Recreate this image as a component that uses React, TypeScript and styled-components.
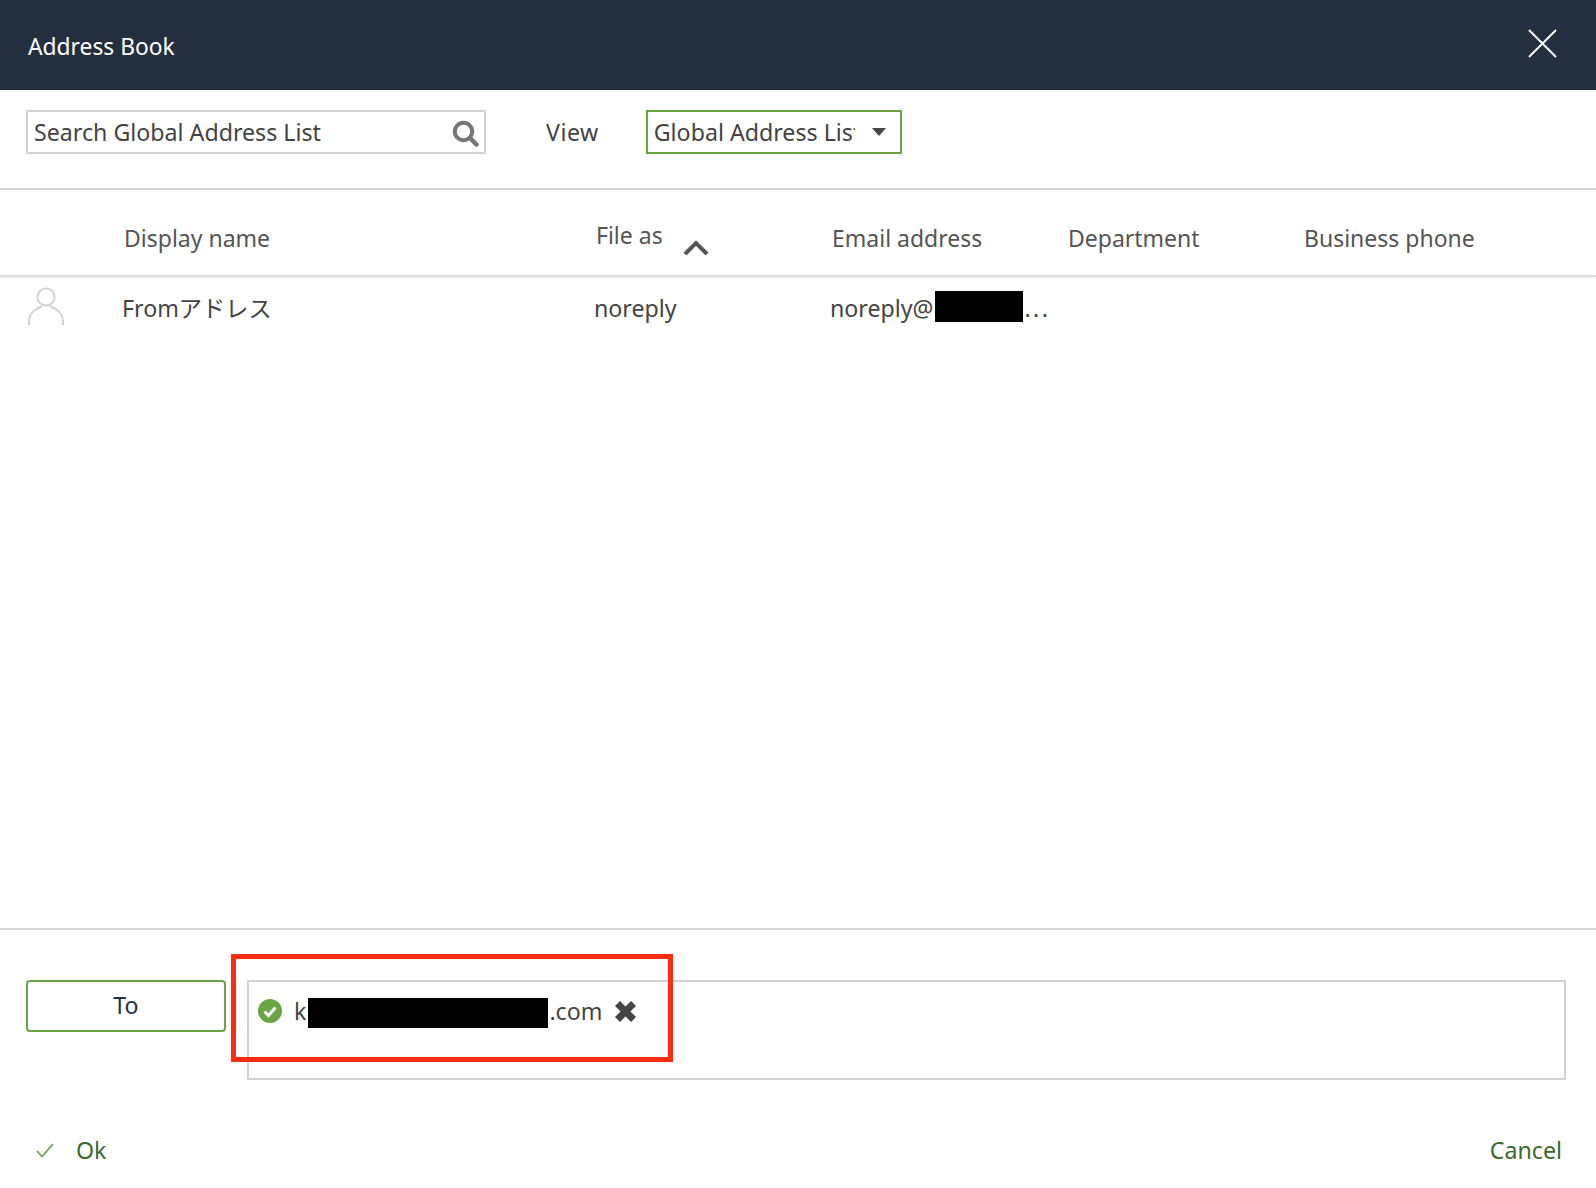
import React from 'react'
import styled, { createGlobalStyle } from 'styled-components'

const GlobalStyle = createGlobalStyle`
  html, body {
    margin: 0;
    padding: 0;
    background: #fff;
  }
  body {
    font-family: "Noto Sans", "Noto Sans CJK JP", sans-serif;
    color: #444;
  }
  * {
    box-sizing: border-box;
  }
`

const Page = styled.div`
  position: relative;
  display: flex;
  flex-direction: column;
  width: 100%;
  height: 100vh;
  overflow: hidden;
`

const TitleBar = styled.div`
  display: flex;
  align-items: center;
  justify-content: space-between;
  height: 90px;
  flex-shrink: 0;
  padding: 2px 39px 0 28px;
  background: #232f3f;
  color: #fff;
  font-size: 22.8px;

  svg {
    margin-bottom: 6px;
  }
`

const Toolbar = styled.div`
  display: flex;
  align-items: flex-start;
  height: 100px;
  flex-shrink: 0;
  padding: 20px 26px 0;
  border-bottom: 2px solid #d4d4d4;
`

const Search = styled.div`
  display: flex;
  align-items: center;
  justify-content: space-between;
  width: 460px;
  height: 44px;
  padding: 0 5px 0 6px;
  border: 2px solid #d2d2d2;
  font-size: 23.2px;

  svg {
    margin-top: 2px;
  }
`

const ViewLabel = styled.span`
  margin: 0 47px 0 60px;
  line-height: 44px;
  font-size: 23.2px;
  letter-spacing: 0.5px;
`

const Select = styled.div`
  display: flex;
  align-items: center;
  justify-content: space-between;
  width: 256px;
  height: 44px;
  padding: 0 14px 0 6px;
  border: 2px solid #6ba543;
  font-size: 23.2px;
`

const SelectText = styled.span`
  width: 201px;
  overflow: hidden;
  white-space: nowrap;
`

const Caret = styled.span`
  width: 0;
  height: 0;
  border-left: 7.5px solid transparent;
  border-right: 7.5px solid transparent;
  border-top: 8.5px solid #444;
`

const Columns = styled.div`
  display: grid;
  grid-template-columns: 124px 472px 236px 236px 236px 1fr;
`

const HeaderRow = styled(Columns)`
  height: 87px;
  flex-shrink: 0;
  padding-top: 30px;
  border-bottom: 2px solid #dcdcdc;
  box-shadow: 0 1px 3px rgba(0, 0, 0, 0.08);
  color: #555;
  font-size: 23px;
  line-height: 36px;
`

const SortCell = styled.span`
  display: flex;
  align-items: flex-start;
  gap: 20px;
  margin-top: -3px;

  svg {
    margin-top: 23px;
  }
`

const Row = styled(Columns)`
  flex: 1;
  align-content: start;
  align-items: start;
  padding-top: 11px;
  font-size: 23.2px;
  line-height: 40px;
`

const Cell = styled.span`
  margin-left: -2px;
  white-space: nowrap;
`

const Dots = styled.span`
  letter-spacing: 2.4px;
`

const AvatarCell = styled.span`
  padding-left: 28px;
  height: 40px;
  margin-top: -1px;

  svg {
    display: block;
  }
`

const Redacted = styled.span<{ $width: number; $height: number; $drop: number; $gap: number }>`
  display: inline-block;
  width: ${({ $width }) => $width}px;
  height: ${({ $height }) => $height}px;
  margin: 0 1px 0 ${({ $gap }) => $gap}px;
  background: #000;
  vertical-align: -${({ $drop }) => $drop}px;
`

const RecipientBar = styled.div`
  display: flex;
  align-items: flex-start;
  gap: 21px;
  flex-shrink: 0;
  padding: 50px 30px 0 26px;
  border-top: 2px solid #d4d4d4;
`

const ToButton = styled.div`
  display: flex;
  align-items: center;
  justify-content: center;
  width: 200px;
  height: 52px;
  padding-bottom: 2px;
  border: 2px solid #6ba543;
  border-radius: 4px;
  color: #232f3f;
  font-size: 23.2px;
`

const RecipientBox = styled.div`
  flex: 1;
  height: 100px;
  padding: 13px 0 0 9px;
  border: 2px solid #d2d2d2;
`

const Chip = styled.div`
  display: flex;
  align-items: center;
  height: 32px;
  font-size: 23.2px;
`

const Address = styled.span`
  margin: 0 12px 0 12px;
  line-height: 32px;
  white-space: nowrap;
`

const Actions = styled.div`
  display: flex;
  align-items: center;
  justify-content: space-between;
  height: 108px;
  flex-shrink: 0;
  padding: 32px 34px 0 36px;
  color: #3a6b2e;
  font-size: 23.2px;
`

const OkAction = styled.span`
  display: flex;
  align-items: center;
  gap: 22px;
`

// the red box was drawn over the screenshot, so it sits on top of the form
const Annotation = styled.div`
  position: absolute;
  left: 231px;
  top: 954px;
  width: 442px;
  height: 108px;
  border: 5px solid #ff2c0d;
`

export default function App() {
  return (
    <Page>
      <GlobalStyle />
      <TitleBar>
        <span>Address Book</span>
        <svg width="29" height="29" viewBox="0 0 30 30" fill="none" stroke="#fff" strokeWidth="2">
          <path d="M1 1 L29 29 M29 1 L1 29" />
        </svg>
      </TitleBar>

      <Toolbar>
        <Search>
          <span>Search Global Address List</span>
          <svg width="27" height="27" viewBox="0 0 27 27" fill="none" stroke="#777">
            <circle cx="11.5" cy="11.5" r="8.7" strokeWidth="4" />
            <path d="M18 18 L24.5 24.5" strokeWidth="4.5" strokeLinecap="round" />
          </svg>
        </Search>
        <ViewLabel>View</ViewLabel>
        <Select>
          <SelectText>Global Address List</SelectText>
          <Caret />
        </Select>
      </Toolbar>

      <HeaderRow>
        <span />
        <span>Display name</span>
        <SortCell>
          File as
          <svg width="26" height="16" viewBox="0 0 26 16" fill="none" stroke="#555" strokeWidth="4">
            <path d="M2 14 L13 3 L24 14" />
          </svg>
        </SortCell>
        <span>Email address</span>
        <span>Department</span>
        <span>Business phone</span>
      </HeaderRow>

      <Row>
        <AvatarCell>
          <svg width="36" height="39" viewBox="0 0 36 39" fill="none" stroke="#d4d4d4" strokeWidth="2">
            <circle cx="18" cy="10" r="8.6" />
            <path d="M1 38 V34 C1 26 8 22 14 19 M35 38 V34 C35 26 28 22 22 19" />
          </svg>
        </AvatarCell>
        <Cell>Fromアドレス</Cell>
        <Cell>noreply</Cell>
        <Cell>
          noreply@
          <Redacted $width={88} $height={31} $drop={5} $gap={2} />
          <Dots>...</Dots>
        </Cell>
      </Row>

      <RecipientBar>
        <ToButton>To</ToButton>
        <RecipientBox>
          <Chip>
            <svg width="24" height="24" viewBox="0 0 24 24">
              <circle cx="12" cy="12" r="12" fill="#6ba543" />
              <path d="M6.5 12.5 L10.5 16.5 L17.5 8.5" fill="none" stroke="#fff" strokeWidth="3" />
            </svg>
            <Address>
              k
              <Redacted $width={240} $height={30} $drop={8} $gap={2} />
              .com
            </Address>
            <svg width="23" height="23" viewBox="0 0 23 23" fill="none" stroke="#444" strokeWidth="7">
              <path d="M3.5 3.5 L19.5 19.5 M19.5 3.5 L3.5 19.5" />
            </svg>
          </Chip>
        </RecipientBox>
      </RecipientBar>

      <Actions>
        <OkAction>
          <svg width="18" height="15" viewBox="0 0 18 15" fill="none" stroke="#6ba543" strokeWidth="1.6">
            <path d="M1 8 L6 13.5 L17 1" />
          </svg>
          Ok
        </OkAction>
        <span>Cancel</span>
      </Actions>

      <Annotation />
    </Page>
  )
}
